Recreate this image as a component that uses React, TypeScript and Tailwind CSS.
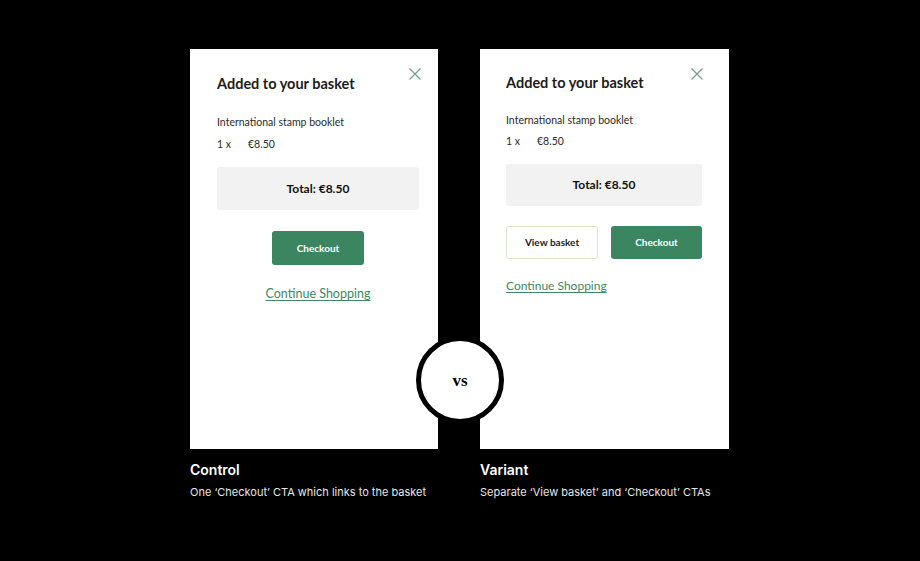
import React from 'react';

const CloseIcon: React.FC = () => (
  <svg width="12" height="12" viewBox="0 0 12 12" fill="none" stroke="#6f9f8b" strokeWidth="1.2">
    <path d="M0.5 0.5 L11.5 11.5 M11.5 0.5 L0.5 11.5" />
  </svg>
);

const cardFont = { fontFamily: 'Lato, "Open Sans", sans-serif' };

const ItemInfo: React.FC<{ gap: string }> = ({ gap }) => (
  <>
    <p className="text-[10.5px] text-[#2a2a2a] leading-[14px]">International stamp booklet</p>
    <div className={`flex text-[10.5px] text-[#2a2a2a] leading-[14px] ${gap}`}>
      <span className="w-[31px]">1 x</span>
      <span>€8.50</span>
    </div>
  </>
);

const ControlCard: React.FC = () => (
  <div className="relative h-[400px] bg-white pt-[25px] pl-[27px] pr-[19px]" style={cardFont}>
    <div className="absolute top-[19px] right-[17px]">
      <CloseIcon />
    </div>
    <h3 className="text-[14.5px] font-bold text-[#1c1c1c] leading-[20px]">Added to your basket</h3>
    <div className="mt-[21px]">
      <ItemInfo gap="mt-[8px]" />
    </div>
    <div className="mt-[16px] h-[43px] bg-[#f2f2f2] rounded-[3px] flex items-center justify-center text-[12px] font-bold text-[#111]">
      Total: €8.50
    </div>
    <div className="flex justify-center mt-[21px]">
      <button className="w-[92px] h-[34px] bg-[#3b8560] rounded-[3px] text-white text-[10px] font-bold">
        Checkout
      </button>
    </div>
    <div className="flex justify-center mt-[20px]">
      <span className="text-[12.5px] text-[#3f8763] underline underline-offset-2">Continue Shopping</span>
    </div>
  </div>
);

const VariantCard: React.FC = () => (
  <div className="relative h-[400px] bg-white pt-[24px] pl-[26px] pr-[27px]" style={cardFont}>
    <div className="absolute top-[19px] right-[26px]">
      <CloseIcon />
    </div>
    <h3 className="text-[14.5px] font-bold text-[#1c1c1c] leading-[20px]">Added to your basket</h3>
    <div className="mt-[20px]">
      <ItemInfo gap="mt-[7px]" />
    </div>
    <div className="mt-[16px] h-[42px] bg-[#f2f2f2] rounded-[3px] flex items-center justify-center text-[12px] font-bold text-[#111]">
      Total: €8.50
    </div>
    <div className="flex gap-[13px] mt-[20px]">
      <button className="w-[92px] h-[33px] border border-[#dde8c6] rounded-[3px] text-[#1c1c1c] text-[10px] font-bold">
        View basket
      </button>
      <button className="flex-1 h-[33px] bg-[#3b8560] rounded-[3px] text-white text-[10px] font-bold">
        Checkout
      </button>
    </div>
    <div className="mt-[13px]">
      <span className="text-[12px] text-[#3f8763] underline underline-offset-2">Continue Shopping</span>
    </div>
  </div>
);

const Caption: React.FC<{ title: string; text: string }> = ({ title, text }) => (
  <div className="mt-[12px]" style={{ fontFamily: 'Inter, sans-serif' }}>
    <p className="text-[14px] font-semibold text-white leading-[18px]">{title}</p>
    <p className="text-[11px] text-[#e6e6e6] leading-[16px] mt-[5px]">{text}</p>
  </div>
);

export default function App() {
  return (
    <div className="w-full h-[561px] bg-black pl-[190px]">
      <div className="relative flex gap-[42px] pt-[49px]">
        <div className="w-[248px]">
          <ControlCard />
          <Caption title="Control" text="One ‘Checkout’ CTA which links to the basket" />
        </div>
        <div className="w-[249px]">
          <VariantCard />
          <Caption title="Variant" text="Separate ‘View basket’ and ‘Checkout’ CTAs" />
        </div>
        <div className="absolute left-[226px] top-[336px] w-[88px] h-[88px] rounded-full bg-white border-[5px] border-black flex items-center justify-center">
          <span className="text-[17px] font-bold text-black leading-none" style={{ fontFamily: '"Liberation Serif", serif' }}>
            vs
          </span>
        </div>
      </div>
    </div>
  );
}
